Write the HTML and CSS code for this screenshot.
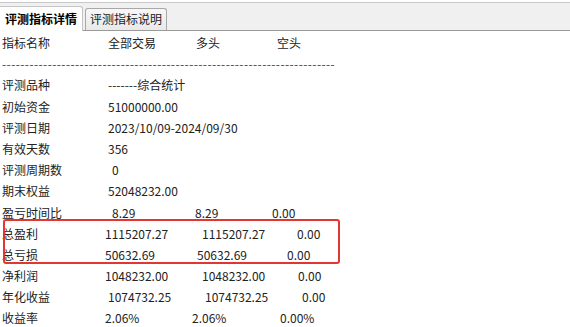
FILE: index.html
```html
<!DOCTYPE html>
<html lang="zh-CN">
<head>
    <meta charset="UTF-8">
    <title>评测指标详情</title>
    <link rel="stylesheet" href="styles.css">
</head>
<body>
    <!-- Tabs -->
    <div class="tabbar">
        <div class="tab active">评测指标详情</div>
        <div class="tab">评测指标说明</div>
    </div>

    <!-- Report -->
    <div class="report">
        <div class="row">
            <span>指标名称</span><span class="o3">全部交易</span><span class="o4">多头</span><span class="o5">空头</span>
        </div>
        <div class="row">
            <span class="dashes">-------------------------------------------------------------------------</span>
        </div>
        <div class="row"><span>评测品种</span><span class="o3 wide">-------综合统计</span></div>
        <div class="row"><span>初始资金</span><span class="o3 wide">51000000.00</span></div>
        <div class="row"><span>评测日期</span><span class="o3 wide">2023/10/09-2024/09/30</span></div>
        <div class="row"><span>有效天数</span><span class="o3">356</span></div>
        <div class="row"><span>评测周期数</span><span class="o7">0</span></div>
        <div class="row"><span>期末权益</span><span class="o3 wide">52048232.00</span></div>
        <div class="row"><span>盈亏时间比</span><span class="o7">8.29</span><span class="o3">8.29</span><span>0.00</span></div>
        <div class="row"><span>总盈利</span><span>1115207.27</span><span class="o10">1115207.27</span><span class="o25">0.00</span></div>
        <div class="row"><span>总亏损</span><span>50632.69</span><span class="o5">50632.69</span><span class="o15">0.00</span></div>
        <div class="row"><span>净利润</span><span>1048232.00</span><span class="o10">1048232.00</span><span class="o26">0.00</span></div>
        <div class="row"><span>年化收益</span><span class="o3">1074732.25</span><span class="o13">1074732.25</span><span class="o30">0.00</span></div>
        <div class="row"><span>收益率</span><span>2.06%</span><span>2.06%</span><span class="o8">0.00%</span></div>

        <!-- highlight annotation -->
        <div class="highlight"></div>
    </div>
</body>
</html>
```

FILE: styles.css
```css
body {
    margin: 0;
    background: #fff;
    font-family: "Noto Sans CJK SC", "Noto Sans", sans-serif;
    font-size: 12px;
    color: #222;
    overflow: hidden;
}

/* Tab strip */
.tabbar {
    margin-top: 2px;
    height: 27px;
    background: #f0f0f0;
    border-top: 1px solid #c9c9c9;
    border-bottom: 1px solid #9a9a9a;
    display: flex;
    align-items: flex-end;
    gap: 2px;
}

.tab {
    height: 21px;
    line-height: 20px;
    padding: 0 4px;
    background: linear-gradient(#f7f7f7, #e9e9e9);
    border: 1px solid #a8a8a8;
    border-bottom: none;
    border-radius: 3px 3px 0 0;
    font-size: 12px;
    color: #222;
}

.tab.active {
    height: 24px;
    line-height: 23px;
    margin-bottom: -1px;
    padding: 0 5px;
    background: #fff;
    border-color: #c4c4c4;
    border-left: none;
    border-radius: 0 3px 0 0;
    font-weight: bold;
    color: #000;
}

/* Report lines */
.report {
    position: relative;
    padding-top: 1px;
}

.row {
    display: grid;
    grid-template-columns: 103px 87px 80px auto;
    padding-left: 2px;
    height: 21.2px;
    line-height: 21.2px;
    white-space: nowrap;
}

.wide {
    grid-column: 2 / 5;
}

.dashes {
    grid-column: 1 / 5;
    letter-spacing: 0.4px;
    color: #444;
}

.o3 { padding-left: 3px; }
.o4 { padding-left: 4px; }
.o5 { padding-left: 5px; }
.o7 { padding-left: 7px; }
.o8 { padding-left: 8px; }
.o10 { padding-left: 10px; }
.o13 { padding-left: 13px; }
.o15 { padding-left: 15px; }
.o25 { padding-left: 25px; }
.o26 { padding-left: 26px; }
.o30 { padding-left: 30px; }

.highlight {
    position: absolute;
    left: 3px;
    top: 188px;
    width: 333px;
    height: 41px;
    border: 2px solid #e53530;
    border-radius: 3px;
}
```
